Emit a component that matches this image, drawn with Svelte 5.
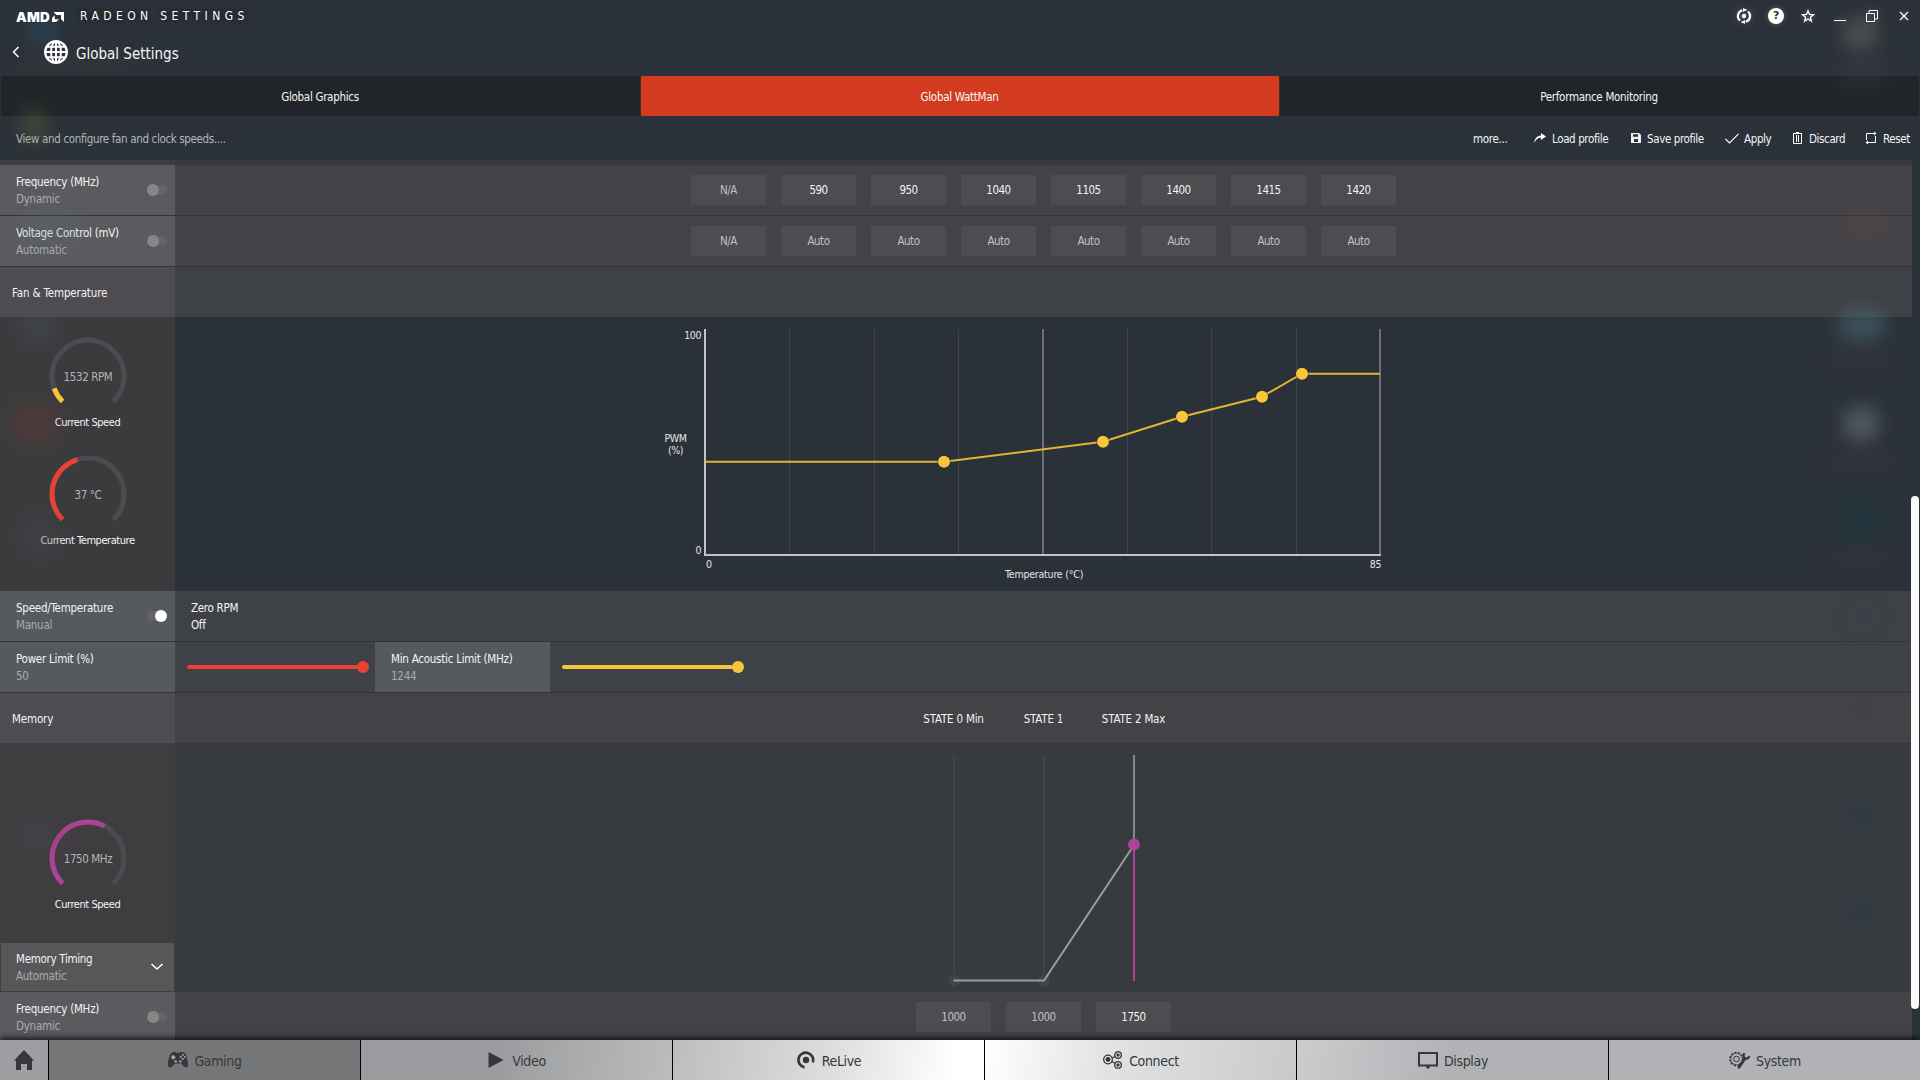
<script>
  const tabs = ['Global Graphics', 'Global WattMan', 'Performance Monitoring'];
  const freqs = ['N/A', '590', '950', '1040', '1105', '1400', '1415', '1420'];
  const volts = ['N/A', 'Auto', 'Auto', 'Auto', 'Auto', 'Auto', 'Auto', 'Auto'];
  const fan = [[239, 132.7], [398, 112.7], [477, 87.7], [557, 67.7], [597, 44.7]];
  const fanLine = [[0, 132.7], ...fan, [675, 44.7]].map((p) => p.join(',')).join(' ');
  const nav = ['Gaming', 'Video', 'ReLive', 'Connect', 'Display', 'System'];

  // Soft shapes of the desktop showing through the translucent window
  const glows = [
    [28, 20, 30, 22, '#2a6080', 0.4], [22, 108, 24, 36, '#8d8440', 0.25], [10, 54, 130, 18, '#4a3f48', 0.25],
    [20, 215, 60, 30, '#5c7078', 0.22], [20, 308, 34, 36, '#4d5a68', 0.25], [14, 402, 42, 42, '#9a3826', 0.2],
    [20, 515, 40, 40, '#4c454b', 0.35], [15, 820, 45, 30, '#4c4c50', 0.3],
    [1842, 18, 36, 32, '#858a80', 0.35], [1838, 55, 50, 30, '#45404b', 0.35],
    [1842, 208, 46, 30, '#694b50', 0.25], [1838, 308, 48, 34, '#4f7685', 0.45], [1824, 352, 72, 14, '#403c46', 0.4],
    [1843, 406, 36, 36, '#727b83', 0.5], [1824, 454, 74, 14, '#413c48', 0.4], [1842, 498, 40, 46, '#164047', 0.4],
    [1824, 550, 72, 14, '#403c48', 0.35], [1842, 598, 42, 38, '#3a4252', 0.35], [1842, 694, 40, 28, '#3e4152', 0.3],
    [1842, 796, 40, 38, '#2b3b48', 0.4], [1842, 894, 40, 38, '#2b3b48', 0.4]
  ];

  function arc(deg) {
    const a = ((225 - deg) * Math.PI) / 180;
    const x = 40 + 36 * Math.cos(a);
    const y = 40 - 36 * Math.sin(a);
    return `M14.54 65.46A36 36 0 ${deg > 180 ? 1 : 0} 1 ${x.toFixed(2)} ${y.toFixed(2)}`;
  }
</script>

{#snippet gauge(value, label, deg, color)}
  <div class="gauge">
    <svg width="80" height="72" viewBox="0 0 80 72" fill="none" stroke-width="5">
      <path d={arc(270)} stroke="#4c4c50" />
      <path d={arc(deg)} stroke={color} />
      <text x="40" y="44.5" text-anchor="middle" class="gval">{value}</text>
    </svg>
    <span>{label}</span>
  </div>
{/snippet}

{#snippet setting(name, value, toggle)}
  <div class="setting">
    <div class="names"><span>{name}</span><span class="dim">{value}</span></div>
    {#if toggle}<i class="toggle {toggle}"></i>{/if}
  </div>
{/snippet}

{#snippet navIcon(name)}
  {#if name === 'Gaming'}
    <svg width="20" height="18" viewBox="0 0 20 18">
      <path fill="#35373a" fill-rule="evenodd" d="M4 1.5 7.5 .7 8.5 1.7h3l1-1L16 1.5c2 1 4 7 4 12 0 3-2 4-4 2l-3-3H7l-3 3c-2 2-4 1-4-2 0-5 2-11 4-12Z" />
      <circle cx="5.2" cy="6.2" r="2" fill="#8d8e8f" />
      <path fill="none" stroke="#aaaaac" stroke-width="1.1" d="M5.2 4v4.4M3 6.2h4.4" />
      <g fill="#aaaaac"><circle cx="14.8" cy="4" r="1" /><circle cx="14.8" cy="8" r="1" /><circle cx="12.8" cy="6" r="1" /><circle cx="16.8" cy="6" r="1" /><circle cx="7.7" cy="10.4" r="1.2" /><circle cx="12.3" cy="10.4" r="1.2" /></g>
    </svg>
  {:else if name === 'Video'}
    <svg width="16" height="16" viewBox="0 0 16 16"><path fill="#35373a" d="M.5 0 15.5 8 .5 16Z" /></svg>
  {:else if name === 'ReLive'}
    <svg width="18" height="18" viewBox="0 0 18 18">
      <path fill="none" stroke="#35373a" stroke-width="2.7" d="M7.5 16.3A7.4 7.4 0 1 1 15.8 11.5" />
      <circle cx="9" cy="9" r="3.2" fill="#35373a" />
    </svg>
  {:else if name === 'Connect'}
    <svg width="20" height="18" viewBox="0 0 20 18" fill="none" stroke="#35373a" stroke-width="1.3">
      <circle cx="5" cy="8.5" r="4.3" /><circle cx="15" cy="4" r="3.3" /><circle cx="15" cy="13.9" r="3.3" />
      <path d="m9 7 3-1.5M9 10.5l3 1.8" />
      <g fill="#35373a" stroke="none"><circle cx="5" cy="8.5" r="2.4" /><circle cx="15" cy="4" r="1.7" /><circle cx="15" cy="13.9" r="1.7" /></g>
    </svg>
  {:else if name === 'Display'}
    <svg width="20" height="17" viewBox="0 0 20 17">
      <path fill="none" stroke="#35373a" stroke-width="2" d="M1 1h18v12.5H1Z" /><path fill="#35373a" d="M8.5 13.5h3V16.5h-3z" />
    </svg>
  {:else}
    <svg width="21" height="18" viewBox="0 0 21 18" fill="none" stroke="#35373a">
      <circle cx="7.5" cy="8" r="6.6" stroke-width="1.4" stroke-dasharray="2.2 1.4" />
      <circle cx="7.5" cy="8" r="5.7" stroke-width=".7" /><circle cx="7.5" cy="8" r="2.8" stroke-width="1" />
      <path d="M10 16.3 16 7.5" stroke-width="2.8" stroke-linecap="round" />
      <path d="M15.5 2.2c-1.6 2-1.2 4 .5 5s3.6.3 4.4-2" stroke-width="2.2" />
    </svg>
  {/if}
{/snippet}

<div class="app">
  <header class="titlebar">
    <div class="brand">
      <b>AMD</b>
      <svg width="12" height="10" viewBox="0 0 12 10" fill="#fff"><path d="M1.5 0H12v10L9 7V3H4.5Z" /><path d="M2.8 3.2 0 6v4h4.2l2.8-2.8H2.8Z" /></svg>
      <span>RADEON SETTINGS</span>
    </div>
    <div class="window-icons">
      <svg viewBox="0 0 16 16" fill="none" stroke="#fff" stroke-width="2.2"><path d="M6.2 2.2A6 6 0 0 0 4 12.5M9.8 13.8A6 6 0 0 0 12 3.5" /><path d="M7.5 1.6A6.3 6.3 0 0 1 10.5 2.2M8.5 14.4a6.3 6.3 0 0 1-3-.6" stroke-width="1.5" /><circle cx="8" cy="8" r="2.2" fill="#fff" stroke="none" /><path d="M7 0v4l3-2ZM9 16v-4l-3 2Z" fill="#fff" stroke="none" /></svg>
      <span class="help">?</span>
      <svg viewBox="0 0 16 16" fill="none" stroke="#fff" stroke-width="1.4"><path d="m8 2.8 1.5 3.6 3.9.3-3 2.5.9 3.9L8 11l-3.3 2.1.9-3.9-3-2.5 3.9-.3Z" /></svg>
      <svg viewBox="0 0 16 16" stroke="#fff"><path d="M2 12.5h12" /></svg>
      <svg viewBox="0 0 16 16" fill="none" stroke="#fff"><path d="M2.5 5.5h8v8h-8ZM5 2.5h8.5V11M5 2.5v3M10.5 11h3" /></svg>
      <svg viewBox="0 0 16 16" stroke="#fff" stroke-width="1.2"><path d="m4 4 8 8M12 4l-8 8" /></svg>
    </div>
  </header>

  <div class="heading">
    <svg width="8" height="12" viewBox="0 0 8 12" fill="none" stroke="#fff" stroke-width="1.5"><path d="M6.5 1 1.5 6l5 5" /></svg>
    <svg class="globe" width="24" height="24" viewBox="0 0 24 24" fill="none" stroke="#fff" stroke-width="1.9"><circle cx="12" cy="12" r="10.8" stroke-width="2.3" /><ellipse cx="12" cy="12" rx="5" ry="10.5" /><path d="M12 1v22M1 12h22M3 6.7h18M3 17.3h18" /></svg>
    <h1>Global Settings</h1>
  </div>

  <nav class="tabs">
    {#each tabs as t, i}<div class:active={i === 1}>{t}</div>{/each}
  </nav>

  <div class="toolbar">
    <span class="hint">View and configure fan and clock speeds....</span>
    <span>more...</span>
    <span class="tool"><svg width="12" height="12" viewBox="0 0 12 12" fill="#fff"><path d="M7 1l5 3.5L7 8V5.7C4 5.7 1.7 7.5.3 11 .4 6.5 3 3.6 7 3.4Z" /></svg>Load profile</span>
    <span class="tool save"><svg width="10" height="10" viewBox="0 0 10 10"><path fill="#eee" fill-rule="evenodd" d="M0 0h8l2 2v8H0ZM2 1.2v2.6h5V1.2ZM3 6V9h4V6Z" /></svg>Save profile</span>
    <span class="tool apply"><svg width="14" height="11" viewBox="0 0 14 11" fill="none" stroke="#fff" stroke-width="1.1"><path d="m.5 6 4 4L13.5.8" /></svg>Apply</span>
    <span class="tool discard"><svg width="10" height="12" viewBox="0 0 10 12" fill="none" stroke="#fff"><path d="M.5 2v9.5h8V2M0 1.5h9M3 .5h3M3.5 3v7M5.5 3v7" /></svg>Discard</span>
    <span class="tool reset"><svg width="12" height="12" viewBox="0 0 12 12" fill="none" stroke="#fff"><path d="M1.5 8V1.500H9M10.500 4v6.500H3" /><path d="m9-.5 2.500 2L9 3.500ZM3 8.500l-2.500 2 2.500 2Z" fill="#fff" stroke="none" /></svg>Reset</span>
  </div>

  <main>
    <div class="row edge"><div class="side"></div><div class="body"></div></div>
    <div class="row line">
      {@render setting('Frequency (MHz)', 'Dynamic', 'off')}
      <div class="body cells">{#each freqs as f, i}<span class:dim={i === 0}>{f}</span>{/each}</div>
    </div>
    <div class="row line">
      {@render setting('Voltage Control (mV)', 'Automatic', 'off')}
      <div class="body cells">{#each volts as v}<span class="dim">{v}</span>{/each}</div>
    </div>
    <div class="row cool"><div class="section">Fan &amp; Temperature</div><div class="body"></div></div>

    <div class="row fan">
      <div class="side gauges">
        {@render gauge('1532 RPM', 'Current Speed', 25, '#f8c63b')}
        {@render gauge('37 °C', 'Current Temperature', 118, '#e94235')}
      </div>
      <div class="body plot">
        <svg width="740" height="274" viewBox="-52 -12 740 274">
          <g stroke="#40454a">{#each [1, 2, 3, 5, 6, 7] as k}<path d="M{Math.round(k * 84.4) + 0.5} 0v226" />{/each}</g>
          <path d="M338 0v226" stroke="#6c7074" stroke-width="2" /><path d="M675 0v226" stroke="#6c7074" stroke-width="2" />
          <path d="M0 0v226h676" fill="none" stroke="#c3c4c6" stroke-width="2" />
          <polyline points={fanLine} fill="none" stroke="#e3b437" stroke-width="2" />
          {#each fan as [x, y]}<circle cx={x} cy={y} r="6.8" fill="#20252a" opacity=".5" /><circle cx={x} cy={y} r="6" fill="#f8c63b" />{/each}
          <g class="axis">
            <text x="-4" y="10" text-anchor="end">100</text><text x="-4" y="225" text-anchor="end">0</text>
            <text x="-29.5" y="113" text-anchor="middle">PWM</text><text x="-29.5" y="125" text-anchor="middle">(%)</text>
            <text x="1" y="239">0</text><text x="676" y="239" text-anchor="end">85</text>
            <text x="339" y="249" text-anchor="middle" textLength="78">Temperature (°C)</text>
          </g>
        </svg>
      </div>
    </div>

    <div class="row line cool">
      {@render setting('Speed/Temperature', 'Manual', 'on')}
      <div class="body zero"><div class="names"><span>Zero RPM</span><span>Off</span></div></div>
    </div>
    <div class="row line cool">
      {@render setting('Power Limit (%)', '50', '')}
      <div class="slider red"></div>
      {@render setting('Min Acoustic Limit (MHz)', '1244', '')}
      <div class="slider yellow"></div>
      <div class="body"></div>
    </div>
    <div class="row">
      <div class="section">Memory</div>
      <div class="body states"><span>STATE 0 Min</span><span>STATE 1</span><span>STATE 2 Max</span></div>
    </div>

    <div class="row memory">
      <div class="side">
        {@render gauge('1750 MHz', 'Current Speed', 162.6, '#ae4199')}
        <div class="dropdown">
          <div class="names"><span>Memory Timing</span><span class="dim">Automatic</span></div>
          <svg width="12" height="8" viewBox="0 0 12 8" fill="none" stroke="#fff" stroke-width="1.6"><path d="m.5 1 5.5 5 5.5-5" /></svg>
        </div>
      </div>
      <div class="body plot">
        <svg width="201" height="249" viewBox="0 0 201 249" fill="none" stroke-width="2">
          <path d="M11 12v225M101 12v225" stroke="#414447" />
          <circle cx="11" cy="237.5" r="6" fill="#424548" /><circle cx="101" cy="237.5" r="6" fill="#424548" />
          <path d="M191 12v90" stroke="#85868a" />
          <path d="M10.5 237.5H101L191 102" stroke="#9b9c9e" />
          <path d="M191 102v136" stroke="#ae4199" /><circle cx="191" cy="101.5" r="6" fill="#ae4199" />
        </svg>
      </div>
    </div>

    <div class="row last">
      {@render setting('Frequency (MHz)', 'Dynamic', 'off')}
      <div class="body cells"><span class="dim">1000</span><span class="dim">1000</span><span>1750</span></div>
    </div>
  </main>

  <footer>
    <div class="home"><svg width="20" height="20" viewBox="0 0 20 20" fill="#35373a"><path d="M10 0 20 10.5h-2V20h-5v-6H7v6H2v-9.5H0Z" /></svg></div>
    {#each nav as n}<div class="item {n.toLowerCase()}">{@render navIcon(n)}<span>{n}</span></div>{/each}
  </footer>

  {#each glows as [x, y, w, h, c, o]}
    <i class="glow" style="left:{x}px;top:{y}px;width:{w}px;height:{h}px;background:{c};opacity:{o}"></i>
  {/each}
  <div class="scrollbar"></div>
</div>

<style>
  :global(body) { margin: 0; background: #2b3138; }
  .app {
    position: relative; width: 1920px; height: 1080px; overflow: hidden;
    display: flex; flex-direction: column; background: #2b3138; color: #f4f4f4;
    font-family: 'DejaVu Sans Condensed', 'DejaVu Sans', sans-serif; font-stretch: condensed;
    font-size: 11.5px; letter-spacing: -0.3px; white-space: nowrap;
  }
  svg { display: block; flex: none; overflow: visible; }
  .titlebar { height: 32px; display: flex; justify-content: space-between; position: relative; z-index: 2; }
  .brand { display: flex; align-items: center; padding: 2px 0 0 16px; }
  .brand b { font: 900 13.5px/14px Inter, sans-serif; letter-spacing: 0.2px; width: 36px; color: #fff; }
  .brand span { margin: -2px 0 0 16px; font-size: 12px; letter-spacing: 4.4px; color: #fff; text-shadow: 0 0 4px #111; }
  .window-icons { display: flex; align-items: center; gap: 16px; padding-right: 8px; }
  .window-icons svg { width: 16px; height: 16px; filter: drop-shadow(0 0 3px #aaa6); }
  .help { width: 16px; height: 16px; border-radius: 50%; background: #fff; color: #2b3138; font: bold 11px/16px 'DejaVu Sans', sans-serif; text-align: center; box-shadow: 0 0 5px #aaa6; }
  .heading { height: 40px; padding: 0 0 4px 12px; display: flex; align-items: center; position: relative; z-index: 2; }
  .globe { margin-left: 24px; }
  h1 { margin: 3px 0 0 8px; font-size: 15px; font-weight: 400; letter-spacing: 0; }
  .tabs { height: 40px; display: grid; grid-template-columns: 639px 638px 639px; gap: 1px; padding-left: 1px; }
  .tabs div { background: #212529; display: grid; place-items: center; padding: 1px 1px 0 0; }
  .tabs .active { background: #d33b20; }
  .toolbar { height: 44px; display: grid; grid-template-columns: 1457px 61px 97px 94px 68px 72px 55px; padding-left: 16px; align-items: center; box-sizing: border-box; padding-top: 1px; width: 1920px; }
  .hint { color: #b4b6b9; letter-spacing: -0.35px; }
  .tool { display: flex; align-items: center; gap: 6px; letter-spacing: -0.38px; }
  .tool svg { margin-top: -1px; }
  .apply { gap: 5px; }
  main { width: 1912px; height: 880px; overflow: hidden; }
  .row { display: flex; height: 50px; }
  .line { border-bottom: 1px solid #323539; }
  .body { flex: 1; background: #434347; }
  .cool .body { background: #3e4145; }
  .cool .section { background: #4e4c51; }
  .cool .setting { background: #565a5e; }
  .edge { height: 5px; }
  .edge .side { background: #403d40; }
  .edge .body { background: #38393c; }
  .side { width: 175px; flex: none; }
  .section { width: 163px; height: 49px; padding: 1px 0 0 12px; display: flex; align-items: center; background: #4f4d51; letter-spacing: -0.15px; }
  .setting { width: 175px; box-sizing: border-box; padding: 0 8px 0 16px; display: flex; align-items: center; justify-content: space-between; background: #5a5b5e; letter-spacing: -0.25px; }
  .names { display: flex; flex-direction: column; line-height: 17px; padding-top: 1px; }
  .dim { color: #aaabad; }
  .toggle { width: 20px; height: 10px; border-radius: 5px; background: #646467; position: relative; }
  .toggle::before { content: ''; position: absolute; left: 0; top: -1px; width: 12px; height: 12px; border-radius: 50%; background: #868686; }
  .toggle.on::before { left: 8px; background: #fff; }
  .cells { display: flex; justify-content: center; align-items: center; gap: 15px; }
  .cells span { width: 75px; height: 30px; background: #4d4c50; display: grid; place-items: center; letter-spacing: -0.5px; }
  .cells .dim { color: #c0c1c3; }
  .fan { height: 274px; }
  .fan .side { background: #3b3b3e; }
  .fan .body { background: #2b3138; }
  .gauge { display: flex; flex-direction: column; align-items: center; font-size: 11px; letter-spacing: -0.45px; }
  .gauge span { margin-top: 8px; line-height: 14px; }
  .gval { fill: #b3b4b6; stroke: none; font-size: 11.5px; letter-spacing: -0.4px; }
  .gauges { padding-top: 19px; display: flex; flex-direction: column; gap: 23.5px; box-sizing: border-box; }
  .plot { display: flex; justify-content: center; }
  .fan .plot svg { margin-left: -42px; }
  .axis { fill: #e4e5e6; font-size: 10.5px; letter-spacing: -0.4px; }
  .zero { display: flex; align-items: center; padding-left: 16px; }
  .slider { width: 200px; background: #3e4145; display: flex; align-items: center; padding-left: 12px; box-sizing: border-box; --c: #e94235; }
  .yellow { --c: #f8c63b; }
  .slider::before { content: ''; width: 171px; height: 4px; border-radius: 2px; background: var(--c); }
  .slider::after { content: ''; width: 12px; height: 12px; border-radius: 50%; background: var(--c); margin-left: -1px; }
  .states { display: grid; grid-template-columns: repeat(3, 90px); justify-content: center; place-items: center; align-content: center; letter-spacing: -0.2px; padding-top: 1px; height: 49px; }
  .memory { height: 249px; }
  .memory .side { background: #403d41; display: flex; flex-direction: column; justify-content: space-between; padding-top: 74.5px; box-sizing: border-box; }
  .memory .body { background: #373a3e; }
  .dropdown { height: 48px; margin: 0 1px 1px; padding: 0 11px 0 15px; background: #575759; display: flex; align-items: center; justify-content: space-between; }
  footer { height: 40px; display: grid; grid-template-columns: 48px repeat(5, 311px) 311px; gap: 1px; background: #000; box-shadow: 0 -2px 6px #000c; position: relative; color: #35373a; font-size: 14px; letter-spacing: -0.35px; }
  footer div { display: flex; align-items: center; justify-content: center; }
  .item { gap: 6px; padding-left: 1px; }
  .item span { padding-top: 1px; }
  .home { background: #9e9fa2; }
  .gaming { background: #767778; }
  .video { gap: 8px; background: linear-gradient(100deg, #9b9ca0 45%, #a2a3a5 55%, #bbbcbe); }
  .relive { gap: 7px; background: linear-gradient(100deg, #bcbdbf, #dcddde 50%, #fff 90%); }
  .connect { background: linear-gradient(100deg, #fff, #e1e2e3 40%, #c8c9ca); }
  .display { background: linear-gradient(100deg, #cbcccd, #b1b2b6 50%); }
  .system { background: #b1b2b6; }
  .glow { position: absolute; border-radius: 40%; filter: blur(9px); pointer-events: none; }
  .scrollbar { position: absolute; left: 1911px; top: 496px; width: 8px; height: 513px; border-radius: 4px; background: #fafafb; }
</style>
